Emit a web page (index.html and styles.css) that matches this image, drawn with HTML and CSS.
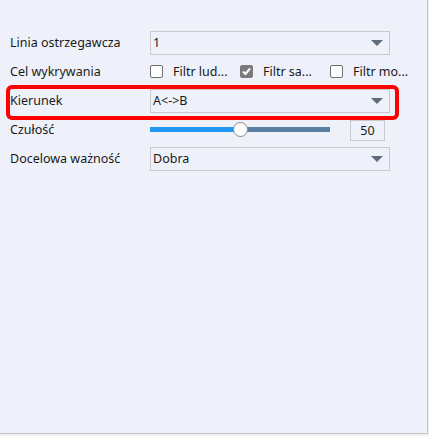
FILE: index.html
```html
<!DOCTYPE html>
<html lang="pl">
<head>
    <meta charset="UTF-8">
    <title>Linia ostrzegawcza</title>
    <link rel="stylesheet" href="styles.css">
</head>
<body>
    <div class="panel">
        <div class="form">
            <div class="row">
                <span class="label">Linia ostrzegawcza</span>
                <div class="select"><span>1</span><i class="arrow"></i></div>
            </div>
            <div class="row">
                <span class="label">Cel wykrywania</span>
                <div class="checks">
                    <label class="check"><span class="box"></span>Filtr lud...</label>
                    <label class="check"><span class="box checked">
                        <svg width="11" height="11" viewBox="0 0 11 11"><path d="M2 5.5 L4.5 8 L9 2.5" fill="none" stroke="#fff" stroke-width="2"/></svg>
                    </span>Filtr sa...</label>
                    <label class="check"><span class="box"></span>Filtr mo...</label>
                </div>
            </div>
            <div class="row highlighted">
                <span class="label">Kierunek</span>
                <div class="select"><span>A&lt;-&gt;B</span><i class="arrow"></i></div>
                <div class="highlight"></div>
            </div>
            <div class="row">
                <span class="label">Czułość</span>
                <div class="slider-wrap">
                    <div class="slider">
                        <div class="fill" style="width: 90px"></div>
                        <div class="thumb" style="left: 90px"></div>
                    </div>
                    <div class="value">50</div>
                </div>
            </div>
            <div class="row">
                <span class="label">Docelowa ważność</span>
                <div class="select"><span>Dobra</span><i class="arrow"></i></div>
            </div>
        </div>
    </div>
</body>
</html>
```

FILE: styles.css
```css
body {
    margin: 0;
    background: #f0f0f0;
    font-family: "Noto Sans", sans-serif;
    font-size: 12.5px;
    color: #1a1a1a;
}

.panel {
    width: 427px;
    height: 433px;
    background: #eef1f9;
    border-right: 1px solid #c4c6ca;
    border-bottom: 1px solid #c4c6ca;
}

.form {
    padding-top: 28px;
}

.row {
    display: flex;
    align-items: center;
    height: 29px;
    position: relative;
}

.label {
    width: 140px;
    padding-left: 10px;
}

.select {
    width: 236px;
    height: 22px;
    border: 1px solid #c8c9cc;
    display: flex;
    align-items: center;
    justify-content: space-between;
    padding-left: 2px;
}

.arrow {
    width: 0;
    height: 0;
    border-left: 6px solid transparent;
    border-right: 6px solid transparent;
    border-top: 6px solid #5f6b7c;
    margin-right: 6px;
}

.checks {
    display: flex;
}

.check {
    width: 90px;
    display: flex;
    align-items: center;
}

.box {
    width: 11px;
    height: 11px;
    border: 1px solid #6e6e6e;
    border-radius: 2px;
    background: #fff;
    margin-right: 10px;
    display: flex;
    align-items: center;
    justify-content: center;
}

.box.checked {
    background: #7a7a7a;
    border-color: #7a7a7a;
}

.highlight {
    position: absolute;
    left: 6px;
    top: -1px;
    width: 385px;
    height: 27px;
    border: 4px solid #ff0000;
    border-radius: 6px;
}

.slider-wrap {
    display: flex;
    align-items: center;
}

.slider {
    position: relative;
    width: 180px;
    height: 5px;
    background: #5b7ea3;
    margin-right: 20px;
}

.fill {
    height: 100%;
    background: #2196f3;
}

.thumb {
    position: absolute;
    top: -5px;
    width: 13px;
    height: 13px;
    margin-left: -7px;
    border: 1px solid #8a8a8a;
    border-radius: 50%;
    background: #fff;
}

.value {
    width: 33px;
    height: 19px;
    border: 1px solid #c8c9cc;
    text-align: center;
    line-height: 19px;
    margin-top: 2px;
}
```
